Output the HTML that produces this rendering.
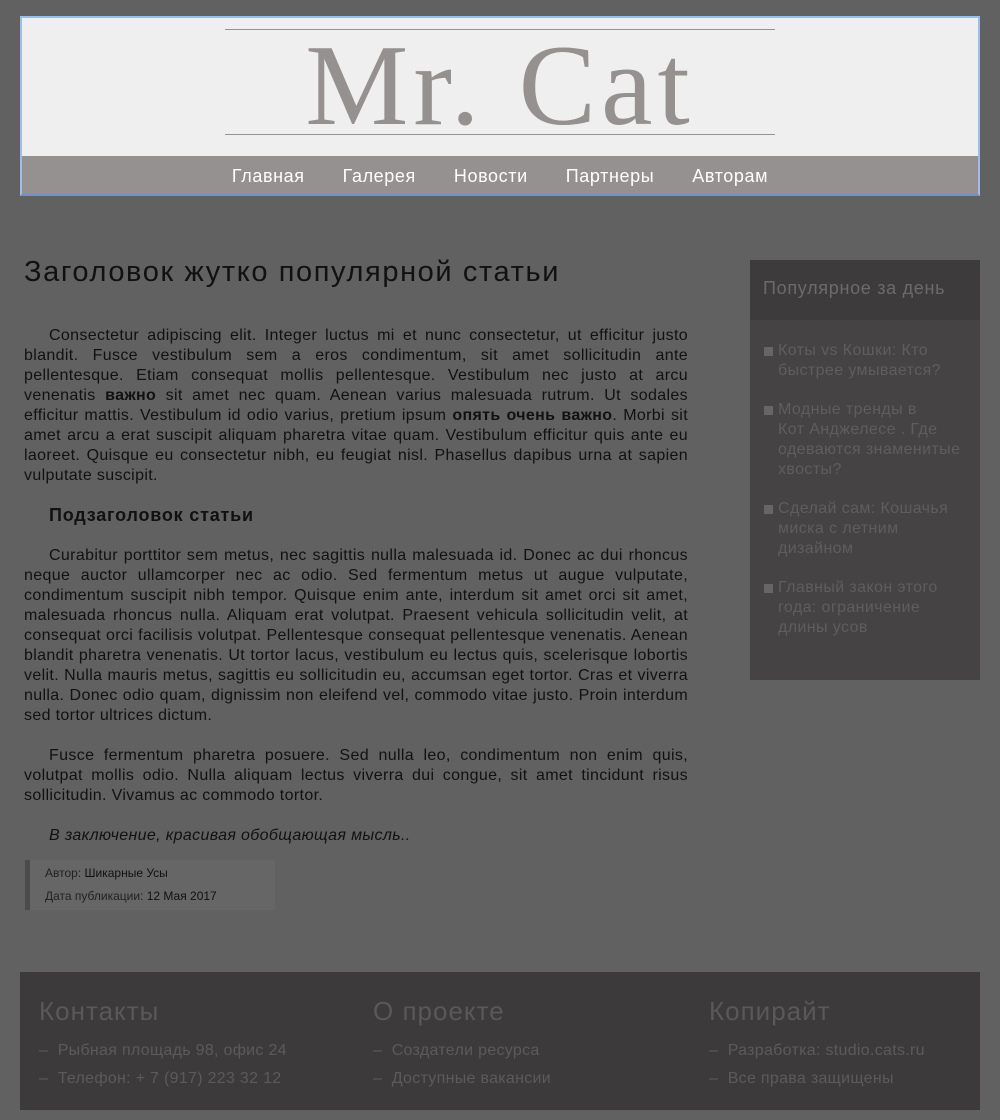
<!DOCTYPE html>
<html><head><meta charset="utf-8"><style>
*{margin:0;padding:0;box-sizing:border-box}
body{width:1000px;height:1120px;background:#616161;font-family:"Liberation Sans",sans-serif;position:relative;overflow:hidden}
.hdr{position:absolute;left:20px;top:16px;width:960px;height:180px;border:2px solid #9ebde8;border-bottom-color:#7192c6;background:#efefef}
.hl{position:absolute;left:203px;width:550px;height:1px;background:#939393}
.title{position:absolute;left:0;width:956px;top:6px;text-align:center;font-family:"Liberation Serif",serif;font-size:116px;line-height:124px;color:#959190;letter-spacing:5px}
.nav{position:absolute;left:0;top:138px;width:956px;height:38px;background:#959190;text-align:center;color:#fff;font-size:18px;line-height:40px;letter-spacing:0.6px}
.nav span{margin:0 19px}
h1{position:absolute;left:24px;top:254px;font-size:29px;font-weight:normal;color:#111;line-height:36px;letter-spacing:1.6px}
.art{position:absolute;left:24px;top:326px;width:664px;font-size:16px;line-height:20px;color:#111;text-align:justify;letter-spacing:0.35px}
.art p{text-indent:25px;margin-bottom:20px}
.art h2{font-size:18px;margin:0 0 20px 25px;line-height:38px;margin-top:-10px;margin-bottom:12px;letter-spacing:0.8px}
.meta{position:absolute;left:25px;top:860px;width:250px;height:50px;background:#666;border-left:5px solid #4b4b4b;font-size:12px;color:#222;padding:2px 15px;line-height:23px}
.meta b{font-weight:normal;color:#111}
.side{position:absolute;left:750px;top:260px;width:230px;height:420px;background:#454344}
.sh{height:60px;background:#3d3b3c;color:#6c6a6b;font-size:18px;line-height:56px;padding-left:13px;letter-spacing:0.7px}
.side ul{list-style:none;padding:21px 10px 0 13px}
.side li{position:relative;padding-left:15px;color:#5f5d5e;font-size:16px;line-height:20px;margin-bottom:19px;letter-spacing:0.4px}
.side li:before{content:"";position:absolute;left:1px;top:6px;width:9px;height:9px;background:#666}
.ft{position:absolute;left:20px;top:972px;width:960px;height:138px;background:#3c3a3b;color:#5c5a5b}
.col{position:absolute;top:22px}
.col h3{font-weight:normal;font-size:26px;line-height:34px;color:#5a5858;margin-bottom:9px;letter-spacing:1px}
.col div{font-size:16px;line-height:28px;letter-spacing:0.3px}
</style></head><body>
<div class="hdr">
<div class="hl" style="top:11px"></div>
<div class="title">Mr. Cat</div>
<div class="hl" style="top:116px"></div>
<div class="nav"><span>Главная</span><span>Галерея</span><span>Новости</span><span>Партнеры</span><span>Авторам</span></div>
</div>
<h1>Заголовок жутко популярной статьи</h1>
<div class="art">
<p>Consectetur adipiscing elit. Integer luctus mi et nunc consectetur, ut efficitur justo blandit. Fusce vestibulum sem a eros condimentum, sit amet sollicitudin ante pellentesque. Etiam consequat mollis pellentesque. Vestibulum nec justo at arcu venenatis <b>важно</b> sit amet nec quam. Aenean varius malesuada rutrum. Ut sodales efficitur mattis. Vestibulum id odio varius, pretium ipsum <b>опять очень важно</b>. Morbi sit amet arcu a erat suscipit aliquam pharetra vitae quam. Vestibulum efficitur quis ante eu laoreet. Quisque eu consectetur nibh, eu feugiat nisl. Phasellus dapibus urna at sapien vulputate suscipit.</p>
<h2>Подзаголовок статьи</h2>
<p>Curabitur porttitor sem metus, nec sagittis nulla malesuada id. Donec ac dui rhoncus neque auctor ullamcorper nec ac odio. Sed fermentum metus ut augue vulputate, condimentum suscipit nibh tempor. Quisque enim ante, interdum sit amet orci sit amet, malesuada rhoncus nulla. Aliquam erat volutpat. Praesent vehicula sollicitudin velit, at consequat orci facilisis volutpat. Pellentesque consequat pellentesque venenatis. Aenean blandit pharetra venenatis. Ut tortor lacus, vestibulum eu lectus quis, scelerisque lobortis velit. Nulla mauris metus, sagittis eu sollicitudin eu, accumsan eget tortor. Cras et viverra nulla. Donec odio quam, dignissim non eleifend vel, commodo vitae justo. Proin interdum sed tortor ultrices dictum.</p>
<p>Fusce fermentum pharetra posuere. Sed nulla leo, condimentum non enim quis, volutpat mollis odio. Nulla aliquam lectus viverra dui congue, sit amet tincidunt risus sollicitudin. Vivamus ac commodo tortor.</p>
<p><i>В заключение, красивая обобщающая мысль..</i></p>
</div>
<div class="meta">Автор: <b>Шикарные Усы</b><br>Дата публикации: <b>12 Мая 2017</b></div>
<div class="side"><div class="sh">Популярное за день</div>
<ul><li>Коты vs Кошки: Кто быстрее умывается?</li><li>Модные тренды в<br>Кот Анджелесе . Где одеваются знаменитые хвосты?</li><li>Сделай сам: Кошачья миска с летним дизайном</li><li>Главный закон этого года: ограничение длины усов</li></ul></div>
<div class="ft">
<div class="col" style="left:19px"><h3>Контакты</h3><div>–&nbsp; Рыбная площадь 98, офис 24</div><div>–&nbsp; Телефон: + 7 (917) 223 32 12</div></div>
<div class="col" style="left:353px"><h3>О проекте</h3><div>–&nbsp; Создатели ресурса</div><div>–&nbsp; Доступные вакансии</div></div>
<div class="col" style="left:689px"><h3>Копирайт</h3><div>–&nbsp; Разработка: studio.cats.ru</div><div>–&nbsp; Все права защищены</div></div>
</div>
</body></html>
